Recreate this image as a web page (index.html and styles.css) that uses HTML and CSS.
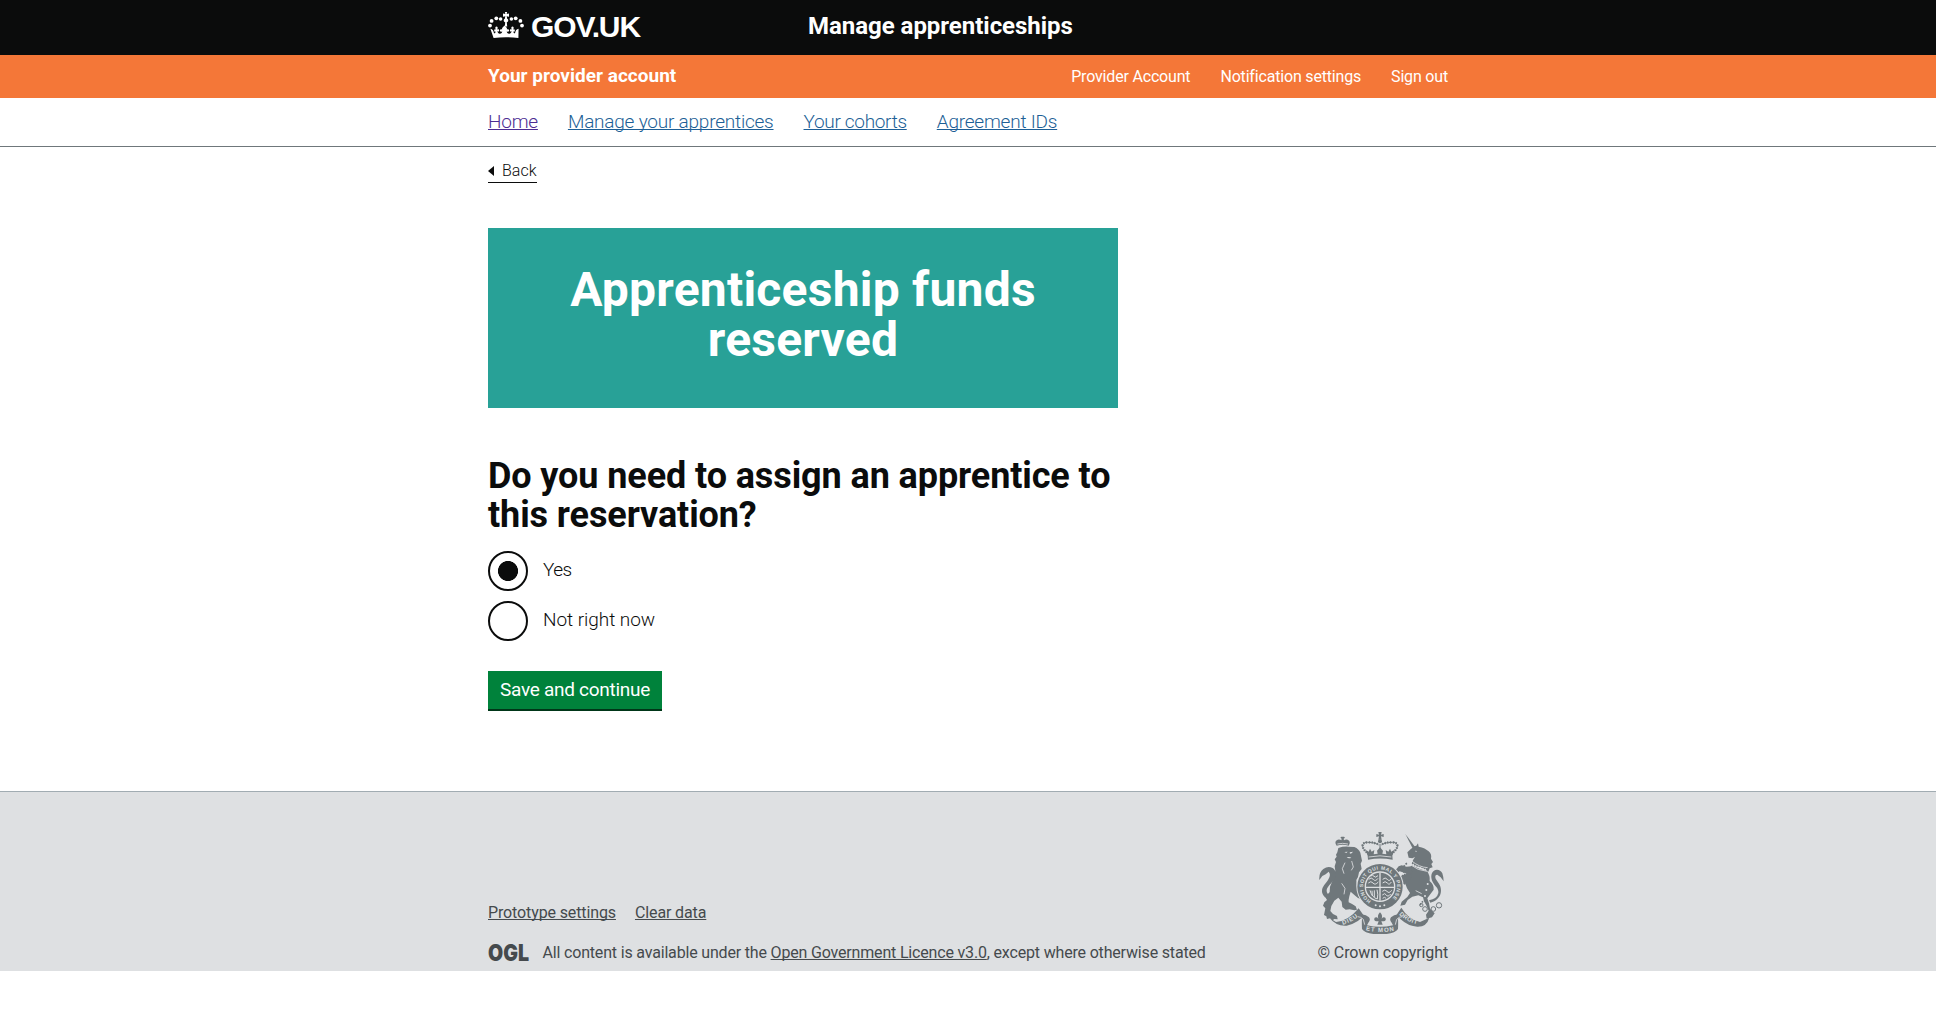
FILE: index.html
```html
<!DOCTYPE html>
<html lang="en">
<head>
<meta charset="utf-8">
<title>Manage apprenticeships</title>
<link rel="stylesheet" href="styles.css">
</head>
<body>
<header class="header">
  <div class="width header-inner">
    <a class="logo" href="#">
      <svg class="crown" viewBox="0 0 36 26" aria-hidden="true">
        <g fill="#fff">
          <circle cx="2" cy="13.6" r="1.9"/><circle cx="3.6" cy="8.9" r="1.9"/><circle cx="8.3" cy="6.3" r="1.9"/><circle cx="12.6" cy="7" r="1.8"/>
          <circle cx="34" cy="13.6" r="1.9"/><circle cx="32.4" cy="8.9" r="1.9"/><circle cx="27.7" cy="6.3" r="1.9"/><circle cx="23.4" cy="7" r="1.8"/>
          <path d="M16.9 0h2.2l-.4 2 2.3-.4v3.2l-2.3-.5.5 2.4c1.3.4 1.5 2.4.3 3.2l-.7.4.4 4.2h-2.4l.4-4.2-.7-.4c-1.2-.8-1-2.8.3-3.2l.5-2.4-2.3.5V1.6l2.3.4z"/>
          <path d="M5.6 26 2.4 16.7c2 .2 3.2 1.7 3.6 4.5 1 .1 1.6-.7 1.5-1.8l-1.3.2v-2.2l1.4.2c0-1-.4-1.6-.2-2.4.4-1 1.8-1 2.200 0 .2.8-.2 1.4-.2 2.400l1.6-.3v2.3l-1.6-.3c.3 1.7 1.2 2.5 2.5 2.4 1.5-.1 2.3-1 2.3-2.4-.7.8-1.9.6-2.300-.3-.4-1.2.8-2.200 2.200-1.600-.3-1.200.2-2 1.200-2.700l1.200-1.100 1.200 1.100c1 .7 1.500 1.500 1.200 2.700 1.400-.6 2.600.4 2.200 1.600-.4.900-1.600 1.100-2.300.3 0 1.400.8 2.300 2.300 2.400 1.300.1 2.200-.7 2.500-2.400l-1.600.3v-2.300l1.600.3c0-1-.4-1.600-.2-2.400.4-1 1.800-1 2.200 0 .2.800-.2 1.400-.2 2.400l1.400-.2v2.200l-1.300-.2c-.1 1.100.5 1.900 1.500 1.800.4-2.800 1.600-4.300 3.600-4.500L30.400 26c-7.700-1-17.100-1-24.800 0z"/>
        </g>
      </svg>
      <span class="logo-text">GOV.UK</span>
    </a>
    <a class="service" href="#">Manage apprenticeships</a>
  </div>
</header>
<div class="account">
  <div class="width account-inner">
    <span class="account-name">Your provider account</span>
    <nav class="account-links">
      <a href="#">Provider Account</a><a href="#">Notification settings</a><a href="#">Sign out</a>
    </nav>
  </div>
</div>
<nav class="nav">
  <div class="width nav-inner">
    <a class="visited" href="#">Home</a><a href="#">Manage your apprentices</a><a class="cohorts" href="#">Your cohorts</a><a href="#">Agreement IDs</a>
  </div>
</nav>
<main class="width main">
  <a class="back" href="#"><svg class="back-arrow" viewBox="0 0 6 10"><path d="M0 5 6 0v10z" fill="#0b0c0c"/></svg>Back</a>
  <div class="panel"><h1>Apprenticeship funds reserved</h1></div>
  <form class="form">
    <h2>Do you need to assign an apprentice to this reservation?</h2>
    <label class="radio"><input type="radio" name="assign" checked><span class="yes">Yes</span></label>
    <label class="radio"><input type="radio" name="assign"><span>Not right now</span></label>
    <button class="button" type="button">Save and continue</button>
  </form>
</main>
<footer class="footer">
  <div class="width footer-inner">
    <div class="footer-left">
      <div class="footer-links"><a href="#">Prototype settings</a><a href="#">Clear data</a></div>
      <div class="licence">
        <svg class="ogl" viewBox="0 0 41 17" aria-label="OGL"><text x="0" y="16.8" textLength="41" lengthAdjust="spacingAndGlyphs">OGL</text></svg>
        <span>All content is available under the <a href="#">Open Government Licence v3.0</a>, except where otherwise stated</span>
      </div>
    </div>
    <div class="copyright">
      <svg class="arms" viewBox="60 36 375 306" aria-hidden="true">
        <defs>
          <path id="garter" d="M216 243A51 51 0 1 1 270 243"/>
          <path id="left-scroll" d="M131 314Q161 307 184 283"/>
          <path id="mid-scroll" d="M200 331Q243 341 290 331"/>
          <path id="right-scroll" d="M300 283Q322 306 362 314"/>
        </defs>
        <g fill="#6f777b">
          <!-- lion -->
          <path d="M113 77q-9-14 3-18 8-1 11 2l1-5-4-3 3-3h8l3 3-4 3 1 5q3-3 11-2 11 4 3 18-18-5-36 0z"/>
          <path d="M118 84q14-5 30-4l18 1q14 6 18 17l5 24-4 9 3 16-8 10-3 14-5 9 1 18q4 10 12 20l6 14-2 6q-14-2-22-12l-12-11-4 14q-3 12-2 18 13 6 21 12l4 10-8 2-14-3-12 1-10-8-2-16-10-12-12 9-9 16-3 15 8 9 12 6 2 10-10-1-5 4-8-6-9 2-2-8-7-4 4-20-7-8 4-10 8-7-3-5 4-11 7-8 1-16 6-14 4-8 0-11 6-14-2-14 4-13-4-8 6-8-2-6 4-7z"/>
          <path d="M93 240q-19-6-23-20c-5-18 10-28 17-40 6-10 8-18 2-25l-9 8-10 5-9 12q-2-22 12-33 14-11 28-3 12 8 8 25c-2 12-12 20-20 29-8 10-10 22 6 31z"/>
          <!-- unicorn -->
          <path d="M319 42l30 40-7 5z"/>
          <path d="M325 97q10-10 21-18l6-2 5-7 2 10q20 4 30 14 10 8 7 22l6 10-5 6 4 10-9 3-4 10q-14-10-24-13-18-4-26-11 2-10 10-20l-8 4-11-2z"/>
          <path d="M338 136q22 12 46 17 10 14 8 30 14 12 12 26l-9 12-10 14 5 15 3 16 14 14-8 12-16 4-2-12 8-12-6-14-8-14-3-12-14-6-18 4-14 10-8 14-14 3 4-12 17-14 8-12-9-14-6-16-6-14z"/>
          <path d="M337 139l-14 1-15-4-9 3-9 11 4 9 8-5 9 3 16 5 13-3zM338 164l-16 2-12-2-6 8 4 18 10 4 4-7-8-9 20 2z"/>
          <path d="M390 241q24-4 28-22c2-14-10-20-17-33-8-16-4-32 8-36q14-3 21 10 4 12 4 24l-9-12-10-8q-9 0-5 12l8 12c14 18 12 50-24 60z"/>
          <!-- crown above the shield -->
          <path d="M238 36h10l-2 8 8-2v9l-8-2 2 10h-10l2-10-8 2v-9l8 2z"/>
          <circle cx="243" cy="64" r="6"/>
          <path d="M206 107l-5-17 8 5 4-9 5 9 8-5-2 13 12-2-2-9 9-10 9 10-2 9 12 2-2-13 8 5 5-9 4 9 8-5-5 17 1 12q-38-7-74 0z"/>
          <!-- scrolls -->
          <path d="M91 293l20 13q36-2 68-41l14 20q-10 22-50 32-30 3-52-24z"/>
          <path d="M174 288q2-7 14-5 14 1 22 9 6 8-2 16l-4 8q39 9 78 0l-4-8q-8-8-2-16 8-8 22-9 12-2 14 5-12 2-15 9 1 10 0 30-10 16-54 16-44 0-54-16-1-20 0-30-3-7-15-9z"/>
          <path d="M307 263q20 34 56 43l28-13q-8 28-36 27-26 0-50-22l-13-12z"/>
          <path d="M243 277q-9 9-5 19-5-7-11-3-4 8 4 11h8l-4 10h16l-4-10h8q8-3 4-11-6-4-11 3 4-10-5-19z"/>
        </g>
        <g fill="none" stroke="#6f777b">
          <path d="M210 103c-26-20-24-36-4-36q24 0 33 8M276 103c26-20 24-36 4-36q-24 0-33 8M243 72v20" stroke-width="3"/>
          <path d="M210 103c-26-20-24-36-4-36q24 0 33 8M276 103c26-20 24-36 4-36q-24 0-33 8" stroke-width="7" stroke-dasharray="4 4"/>
          <path d="M324 130q-20 12-3 40M381 239q-19 10-15 16" stroke-width="5" stroke-dasharray="5 4"/>
          <g stroke-width="3"><circle cx="420" cy="256" r="8"/><circle cx="403" cy="267" r="7"/><circle cx="378" cy="267" r="7"/><circle cx="367" cy="255" r="5"/></g>
        </g>
        <!-- garter and quartered shield -->
        <circle cx="243" cy="200" r="71" fill="#dee0e2"/>
        <circle cx="243" cy="200" r="57" fill="none" stroke="#6f777b" stroke-width="22"/>
        <circle cx="243" cy="200" r="42" fill="#6f777b"/>
        <g fill="none" stroke="#dee0e2" stroke-width="3">
          <path d="M243 158v84M201 202h84" stroke-width="4"/>
          <path d="M209 178q8-8 14 0t14-3M208 189q8-8 14 0t16-3M215 168q6-5 10 1t12-2M251 178q8-8 14 0t13-3M251 189q8-8 14 0t12-3M213 211q6 22 22 26 3-14-1-28M219 212l1 16M226 211v20M250 214q8-8 14 0t14-3M250 225q8-8 12 0t13-3M251 235q6-6 10 0"/>
        </g>
        <g fill="#dee0e2">
          <circle cx="230" cy="256" r="3"/><circle cx="243" cy="259" r="3"/><circle cx="256" cy="256" r="3"/>
          <path d="M136 96l10-1-4 4zM152 97l10-2-4 5-5 1zM143 112q8-3 14 1-8 4-14-1zM348 92l6 1-3 3z"/>
          <circle cx="378" cy="228" r="3"/><circle cx="386" cy="192" r="3"/><circle cx="382" cy="210" r="3"/>
        </g>
        <g fill="none" stroke="#dee0e2" stroke-width="2.5">
          <path d="M115 72q16-4 32 0M209 111q34-7 68 0M337 122q24 20 49 21M334 134q22 18 50 20M138 128l-8 18 5 15M158 123l5 18-6 10M176 290q10 0 17 8l4 16M310 290q-10 0-17 8l-4 16"/>
          <path d="M335 128q24 18 50 21" stroke-dasharray="3 5" stroke-width="5"/>
          <path d="M128 190l10 15-3 18M350 212l18 9"/>
        </g>
        <g class="motto">
          <text><textPath href="#garter" textLength="250" lengthAdjust="spacing">HONI SOIT QUI MAL Y PENSE</textPath></text>
          <text class="scroll"><textPath href="#left-scroll" textLength="52">DIEU</textPath></text>
          <text class="scroll"><textPath href="#mid-scroll" textLength="86">ET MON</textPath></text>
          <text class="scroll"><textPath href="#right-scroll" textLength="62">DROIT</textPath></text>
        </g>
      </svg>
      <span>© Crown copyright</span>
    </div>
  </div>
</footer>
</body>
</html>
```
FILE: styles.css
```css
* { box-sizing: border-box; }
body { margin: 0; background: #fff; color: #0b0c0c; font-family: Roboto, "Liberation Sans", sans-serif; }
.width { width: 960px; margin: 0 auto; }

.header { height: 55px; background: #0b0c0c; }
.header-inner { display: flex; padding-top: 12px; }
.header a { color: #fff; text-decoration: none; }
.logo { display: flex; width: 320px; gap: 7px; }
.crown { width: 36px; height: 26px; }
.logo-text { font: bold 30px/30px "Liberation Sans", Arial, sans-serif; letter-spacing: -1.1px; }
.service { font-size: 24px; font-weight: 700; line-height: 28px; letter-spacing: -.03px; }

.account { height: 43px; background: #f47738; color: #fff; }
.account-inner { display: flex; justify-content: space-between; line-height: 43px; }
.account-name { font-size: 19px; font-weight: 700; line-height: 41px; letter-spacing: .02px; }
.account-links { display: flex; gap: 30px; font-size: 16px; letter-spacing: -.18px; }
.account-links a { color: #fff; text-decoration: none; }

.nav { height: 49px; border-bottom: 1px solid #6f777b; }
.nav-inner { display: flex; gap: 30px; font-size: 19px; font-weight: 300; line-height: 47px; letter-spacing: -.22px; }
.nav a { color: #1d5f96; text-underline-offset: 1px; text-decoration-thickness: 1px; text-decoration-skip-ink: none; }
.nav .visited { color: #4c2c92; }
.nav .cohorts { letter-spacing: -.32px; }

.main { padding: 15px 0 80px; }
.back { display: flex; align-items: center; width: 49px; height: 21px; padding-bottom: 3px; border-bottom: 1px solid #0b0c0c; color: #0b0c0c; font-size: 16px; font-weight: 300; line-height: 17px; text-decoration: none; }
.back-arrow { width: 6px; height: 10px; margin-right: 8px; }
.panel { width: 630px; height: 180px; margin-top: 45px; padding: 37px 60px; background: #28a197; color: #fff; text-align: center; }
h1 { margin: 0; font-size: 48px; line-height: 50px; letter-spacing: .23px; }
.form { display: flex; flex-direction: column; align-items: flex-start; width: 630px; padding-top: 49px; }
h2 { margin: 0 0 16px; font-size: 36px; line-height: 39px; letter-spacing: -.1px; }
.radio { display: flex; align-items: center; gap: 15px; height: 40px; margin-bottom: 10px; font-size: 19px; font-weight: 300; letter-spacing: -.05px; }
.radio span { padding-bottom: 3px; }
.radio .yes { letter-spacing: -.6px; }
.radio input { appearance: none; width: 40px; height: 40px; margin: 0; border: 2px solid #0b0c0c; border-radius: 50%; }
.radio input:checked { background: radial-gradient(circle, #0b0c0c 9.7px, transparent 10.3px); }
.button { width: 174px; height: 40px; margin-top: 20px; padding: 0 0 1px; border: 0; border-bottom: 2px solid #003618; background: #00823b; color: #fff; font: 19px/37px Roboto, sans-serif; letter-spacing: -.28px; }

.footer { height: 180px; border-top: 1px solid #a1acb2; background: #dee0e2; color: #454a4d; font-size: 16px; line-height: 19px; letter-spacing: -.12px; }
.footer-inner { display: flex; justify-content: space-between; align-items: flex-end; height: 179px; padding-bottom: 9px; }
.footer a { color: #454a4d; text-underline-offset: 1px; text-decoration-thickness: 1px; text-decoration-skip-ink: none; }
.footer-left { display: flex; flex-direction: column; gap: 21px; }
.footer-links { display: flex; gap: 19px; }
.licence { display: flex; align-items: center; gap: 13.5px; letter-spacing: -.175px; }
.ogl { width: 41px; height: 17px; overflow: visible; fill: #454a4d; font: 900 23px Inter, sans-serif; letter-spacing: 0; }
.copyright { display: flex; flex-direction: column; align-items: center; gap: 9px; }
.arms { width: 125px; height: 102px; margin-right: 3px; }
.motto { fill: #dee0e2; font: bold 15px "Liberation Sans", sans-serif; letter-spacing: 0; }
.motto .scroll { font-size: 18px; }
```
